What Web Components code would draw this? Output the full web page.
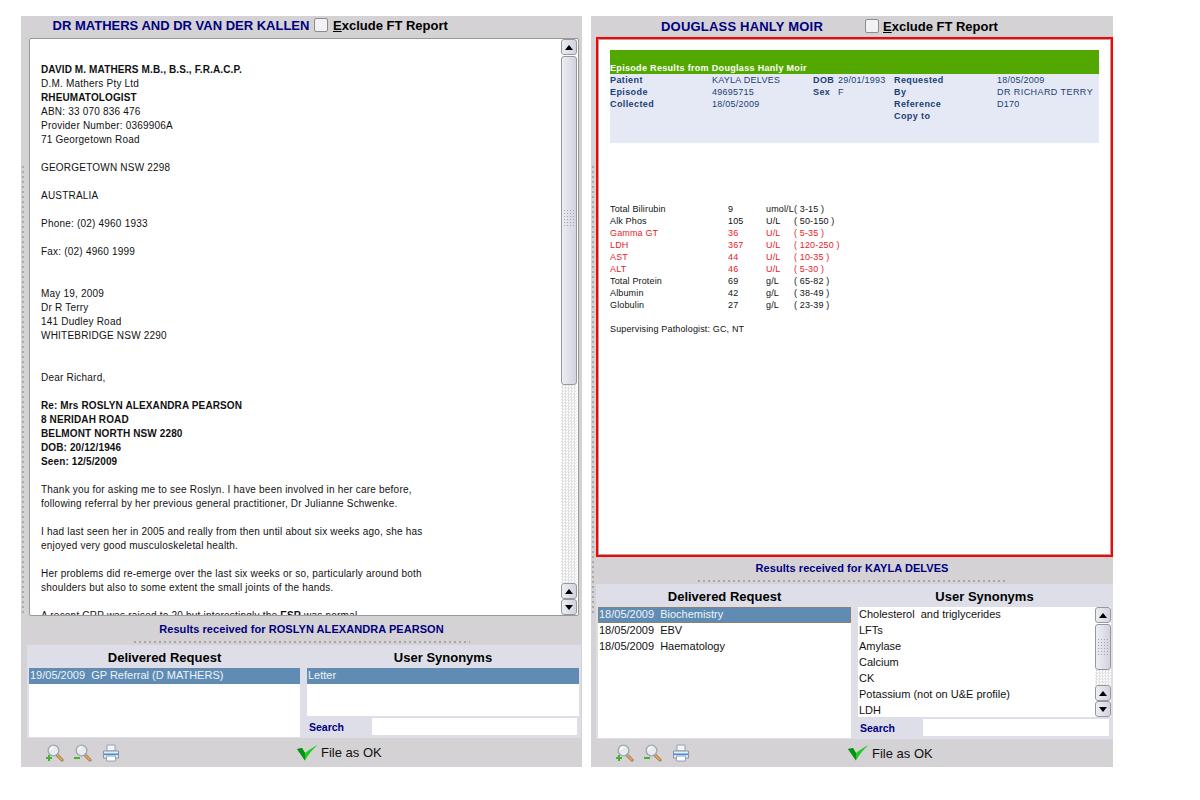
<!DOCTYPE html>
<html>
<head>
<meta charset="utf-8">
<title>Results</title>
<style>
  html, body { margin: 0; background: #fff; }
  body { font-family: "Liberation Sans", Arial, sans-serif; }
  .page { display: flex; gap: 9px; padding: 16px 0 0 21px; align-items: flex-start; }
</style>
</head>
<body>
<template id="icon-zoom-tpl">
  <style>:host { display: block; width: 18px; height: 18px; } svg { display: block; }</style>
  <svg width="18" height="18" viewBox="0 0 18 18">
    <path d="M11 11l5 5" stroke="#8b6a3a" stroke-width="3" stroke-linecap="round"/>
    <path d="M11.5 11.5l4.4 4.4" stroke="#eaa858" stroke-width="1.7" stroke-linecap="round"/>
    <circle cx="7.5" cy="6.5" r="5.4" fill="#e6ebf0" stroke="#a2a8b0" stroke-width="1.4"/>
    <path d="M4.4 6a3.4 3.4 0 0 1 3-2.8" fill="none" stroke="#fff" stroke-width="1.4"/>
    <path class="sign" fill="#3fb52c"/>
  </svg>
</template>
<template id="pane-tpl">
  <style>
    :host { display: flex; flex-direction: column; position: relative; background: #d4d2d5; height: 751px; }
    .grip { position: absolute; left: 1px; top: 150px; height: 450px; width: 2px;
      background: linear-gradient(#aaa 0 2px, transparent 2px) 0 0 / 2px 5px; }
  </style>
  <slot></slot>
  <div class="grip"></div>
</template>
<template id="head-tpl">
  <style>
    :host { display: flex; align-items: center; flex: none; box-sizing: border-box; height: var(--h, 22px); padding: 0 0 var(--pb, 4px) var(--l, 27px);
      font: bold 13px "Liberation Sans", sans-serif; }
    .name { color: #00007f; width: var(--nw, 266px); white-space: nowrap; text-align: var(--ta, center); letter-spacing: var(--ls, 0); padding-top: var(--nt, 0); }
    .box { width: 12px; height: 12px; border: 1px solid #8c8c8c; border-radius: 2px; background: #f2f2f4; margin-right: var(--bm, 5px); }
    .ex { color: #000; white-space: nowrap; }
    u { text-decoration: underline; }
  </style>
  <span class="name"><slot></slot></span><span class="box"></span><span class="ex"><u>E</u>xclude FT Report</span>
</template>
<template id="scroll-tpl">
  <style>
    :host { display: flex; flex-direction: column; flex: none; width: 16px; box-sizing: border-box; }
    .btn { flex: none; height: 16px; box-sizing: border-box; border: 1.5px solid #98989c; border-radius: 3px;
      background: linear-gradient(90deg, #eceef4, #d2d3de); display: flex; align-items: center; justify-content: center; }
    .up::before, .down::before { content: ""; border-left: 4px solid transparent; border-right: 4px solid transparent; }
    .up::before { border-bottom: 5px solid #000; }
    .down::before { border-top: 5px solid #000; }
    .thumb { box-sizing: border-box; flex: none; height: var(--thumb, 329px); margin-top: 1px; border: 1.5px solid #98989c; border-radius: 3px;
      background: linear-gradient(90deg, #eceef4, #d2d3de); position: relative; }
    .thumb::after { content: ""; position: absolute; left: 1px; right: 1px; top: var(--grip, 152px); height: 18px;
      background: radial-gradient(circle, #a4a4aa 0 .8px, transparent 1px) 0 0 / 3px 3px; }
    .track { flex: 1; background: repeating-conic-gradient(#e0e0e0 0 25%, #fff 0 50%) 0 0 / 3px 3px; }
  </style>
  <div class="btn up"></div>
  <div class="thumb"></div>
  <div class="track"></div>
  <div class="btn up"></div>
  <div class="btn down"></div>
</template>
<template id="letter-tpl">
  <style>
    :host { display: flex; flex: none; box-sizing: border-box; height: 578px; margin: 0 3px 0 8px; background: #fff;
      border: 1px solid #999; border-radius: 2px; padding-right: 1px; }
    .txt { flex: 1; overflow: hidden; padding: 24px 0 0 11px; font: 10px/14px "Liberation Sans", sans-serif; letter-spacing: .21px; white-space: pre-line; color: #111; }
    ::slotted(b) { letter-spacing: .12px; }
  </style>
  <div class="txt"><slot></slot></div>
  <x-scroll></x-scroll>
</template>
<template id="status-tpl">
  <style>
    :host { display: flex; flex-direction: column; align-items: center; flex: none; box-sizing: border-box; height: var(--h, 29px); padding-top: var(--t, 6px);
      font: bold 11px/14px "Liberation Sans", sans-serif; letter-spacing: .06px; color: #00007f; }
    .dots { height: 2px; width: var(--dw, 336px); margin-top: 5px; background: linear-gradient(90deg, #a8a8a8 0 2px, transparent 2px) 0 0 / 5px 2px; }
  </style>
  <div><slot></slot></div>
  <div class="dots"></div>
</template>
<template id="report-tpl">
  <style>
    :host { display: block; flex: none; box-sizing: border-box; height: 520px; margin-left: 5px; border: 2px solid #f00; background: #fff; }
    .in { height: 100%; box-sizing: border-box; border: 1px solid #aaa; padding: 10px 11px; font: 9px/12px "Liberation Sans", sans-serif; letter-spacing: .15px; }
    .ban { height: 24px; box-sizing: border-box; background: #52a800; color: #fff; font-weight: bold; display: flex; align-items: flex-end; letter-spacing: .32px; }
    .info { height: 69px; box-sizing: border-box; background: #e5e9f6; color: #1c3f73; letter-spacing: .25px; display: grid; grid-template-columns: 102px 101px 25px 56px 103px 1fr; grid-auto-rows: 12px; }
    .info b { letter-spacing: .4px; }
    .info .wide { letter-spacing: .43px; }
    .res { margin-top: 60px; display: grid; grid-template-columns: 118px 38px 28px 1fr; grid-auto-rows: 12px; color: #111; }
    .res .r { color: #e8222a; }
    .sup { margin-top: 12px; color: #111; }
  </style>
  <div class="in">
    <div class="ban">Episode Results from Douglass Hanly Moir</div>
    <div class="info">
      <b>Patient</b><span>KAYLA DELVES</span><b>DOB</b><span>29/01/1993</span><b>Requested</b><span>18/05/2009</span>
      <b>Episode</b><span>49695715</span><b>Sex</b><span>F</span><b>By</b><span class="wide">DR RICHARD TERRY</span>
      <b>Collected</b><span>18/05/2009</span><span></span><span></span><b>Reference</b><span>D170</span>
      <span></span><span></span><span></span><span></span><b>Copy to</b><span></span>
    </div>
    <div class="res" id="res"></div>
    <div class="sup">Supervising Pathologist: GC, NT</div>
  </div>
</template>
<template id="panel-tpl">
  <style>
    :host { display: grid; grid-template-columns: var(--c1, 271px) 1fr; column-gap: 7px; flex: none; box-sizing: border-box;
      height: var(--h, 93px); padding: 0 2px 1px; margin-left: var(--m, 6px); margin-right: var(--mr, 1px); background: #dddee8; }
    .col { display: flex; flex-direction: column; min-height: 0; }
    h3 { margin: 0; height: 23px; flex: none; font: bold 13px/25px "Liberation Sans", sans-serif; text-align: center; color: #000; }
    .list { flex: 1; background: #fff; min-height: 0; }
    .syn { flex: 1; background: #fff; display: flex; min-height: 0; }
    .items { flex: 1; min-width: 0; }
    .search { flex: none; height: 17px; margin: 2px 2px 2px 2px; display: flex; align-items: center; font: bold 10.5px "Liberation Sans", sans-serif; color: #00007f; }
    .search span { width: 63px; }
    .search i { flex: 1; height: 100%; background: #fff; }
  </style>
  <div class="col"><h3>Delivered Request</h3><div class="list"><slot name="req"></slot></div></div>
  <div class="col"><h3>User Synonyms</h3>
    <div class="syn"><div class="items"><slot name="syn"></slot></div><slot name="bar"></slot></div>
    <div class="search"><span>Search</span><i></i></div>
  </div>
</template>
<template id="row-tpl">
  <style>
    :host { display: block; box-sizing: border-box; height: 16px; padding-left: 1px; font: 11px/14px "Liberation Sans", sans-serif; color: #111; }
    :host([sel]) { background: #608cb4; color: #eef3f8; }
    :host([focus]) { outline: 1px dotted #b07a30; outline-offset: -1px; }
    slot { white-space: pre; }
  </style>
  <slot></slot>
</template>
<template id="foot-tpl">
  <style>
    :host { display: flex; align-items: center; flex: 1; padding-left: var(--l, 25px); font: 13px "Liberation Sans", sans-serif; color: #111; }
    .tools { display: flex; gap: 10px; width: var(--tw, 251px); flex: none; }
    .ok { display: flex; align-items: center; gap: 3px; }
    svg { display: block; }
  </style>
  <div class="tools">
    <x-zoom-icon sign="plus"></x-zoom-icon>
    <x-zoom-icon sign="minus"></x-zoom-icon>
    <svg width="18" height="18" viewBox="0 0 18 18">
      <path d="M5 1h8v6H5z" fill="#f4f6fa" stroke="#98a2b4"/>
      <path d="M1.5 7h15v7h-15z" fill="#e8ecf4" stroke="#8a94a8"/>
      <path d="M2 9.5h14v1.6H2z" fill="#3c8fe0"/>
      <path d="M4.5 12h9v5h-9z" fill="#fff" stroke="#98a2b4"/>
    </svg>
  </div>
  <div class="ok">
    <svg width="21" height="16" viewBox="0 0 21 16">
      <path d="M0 4L5 3 8 8C12 5 16 2 20.5 0 15 5 11 10 8 15.5z" fill="#1ecb22"/>
      <path d="M0 4L8 15.5 8 8 5 3z" fill="#0c8f16"/>
    </svg>
    <span>File as OK</span>
  </div>
</template>
<div class="page">
  <x-pane style="width:561px">
    <x-head>DR MATHERS AND DR VAN DER KALLEN</x-head>
    <x-letter><b>DAVID M. MATHERS M.B., B.S., F.R.A.C.P.</b>
D.M. Mathers Pty Ltd
<b>RHEUMATOLOGIST</b>
ABN: 33 070 836 476
Provider Number: 0369906A
71 Georgetown Road

GEORGETOWN NSW 2298

AUSTRALIA

Phone: (02) 4960 1933

Fax: (02) 4960 1999


May 19, 2009
Dr R Terry
141 Dudley Road
WHITEBRIDGE NSW 2290


Dear Richard,

<b>Re: Mrs ROSLYN ALEXANDRA PEARSON
8 NERIDAH ROAD
BELMONT NORTH NSW 2280
DOB: 20/12/1946
Seen: 12/5/2009</b>

Thank you for asking me to see Roslyn. I have been involved in her care before,
following referral by her previous general practitioner, Dr Julianne Schwenke.

I had last seen her in 2005 and really from then until about six weeks ago, she has
enjoyed very good musculoskeletal health.

Her problems did re-emerge over the last six weeks or so, particularly around both
shoulders but also to some extent the small joints of the hands.

A recent CRP was raised to 20 but interestingly the <b>ESR</b> was normal.</x-letter>
    <x-status>Results received for ROSLYN ALEXANDRA PEARSON</x-status>
    <x-panel>
      <x-row slot="req" sel>19/05/2009  GP Referral (D MATHERS)</x-row>
      <x-row slot="syn" sel>Letter</x-row>
    </x-panel>
    <x-foot></x-foot>
  </x-pane>
  <x-pane style="width:522px">
    <x-head style="--h:21px;--pb:1px;--l:70px;--nw:204px;--ta:left;--ls:.2px;--nt:1px;--bm:4px">DOUGLASS HANLY MOIR</x-head>
    <x-report></x-report>
    <x-status style="--h:27px;--t:4px;--dw:308px">Results received for KAYLA DELVES</x-status>
    <x-panel style="--h:155px;--c1:253px;--m:5px;--mr:0px">
      <x-row slot="req" sel focus>18/05/2009  Biochemistry</x-row>
      <x-row slot="req">18/05/2009  EBV</x-row>
      <x-row slot="req">18/05/2009  Haematology</x-row>
      <x-row slot="syn">Cholesterol  and triglycerides</x-row>
      <x-row slot="syn">LFTs</x-row>
      <x-row slot="syn">Amylase</x-row>
      <x-row slot="syn">Calcium</x-row>
      <x-row slot="syn">CK</x-row>
      <x-row slot="syn">Potassium (not on U&amp;E profile)</x-row>
      <x-row slot="syn">LDH</x-row>
      <x-scroll slot="bar" style="--thumb:46px;--grip:13px"></x-scroll>
    </x-panel>
    <x-foot style="--tw:232px"></x-foot>
  </x-pane>
</div>
<script>
// every element clones its template into an open shadow root
function plain(name, tplId, setup) {
  customElements.define(name, class extends HTMLElement {
    constructor() {
      super();
      const root = this.attachShadow({ mode: "open" });
      root.appendChild(document.getElementById(tplId).content.cloneNode(true));
      if (setup) setup(root, this);
    }
  });
}

const results = [
  ["Total Bilirubin", "9", "umol/L", "( 3-15 )"],
  ["Alk Phos", "105", "U/L", "( 50-150 )"],
  ["Gamma GT", "36", "U/L", "( 5-35 )", 1],
  ["LDH", "367", "U/L", "( 120-250 )", 1],
  ["AST", "44", "U/L", "( 10-35 )", 1],
  ["ALT", "46", "U/L", "( 5-30 )", 1],
  ["Total Protein", "69", "g/L", "( 65-82 )"],
  ["Albumin", "42", "g/L", "( 38-49 )"],
  ["Globulin", "27", "g/L", "( 23-39 )"],
];

plain("x-pane", "pane-tpl");
plain("x-head", "head-tpl");
plain("x-scroll", "scroll-tpl");
plain("x-letter", "letter-tpl");
plain("x-status", "status-tpl");
plain("x-panel", "panel-tpl");
plain("x-row", "row-tpl");
plain("x-foot", "foot-tpl");
plain("x-zoom-icon", "icon-zoom-tpl", (root, el) => {
  const d = el.getAttribute("sign") === "plus"
    ? "M2 11h2v2h2v2H4v2H2v-2H0v-2h2z"
    : "M0 13h6v2H0z";
  root.querySelector(".sign").setAttribute("d", d);
});
plain("x-report", "report-tpl", (root) => {
  const res = root.getElementById("res");
  for (const r of results) {
    r.slice(0, 4).forEach((t) => {
      const s = document.createElement("span");
      s.textContent = t;
      s.style.whiteSpace = "pre";
      if (r[4]) s.className = "r";
      res.appendChild(s);
    });
  }
});
</script>
</body>
</html>
